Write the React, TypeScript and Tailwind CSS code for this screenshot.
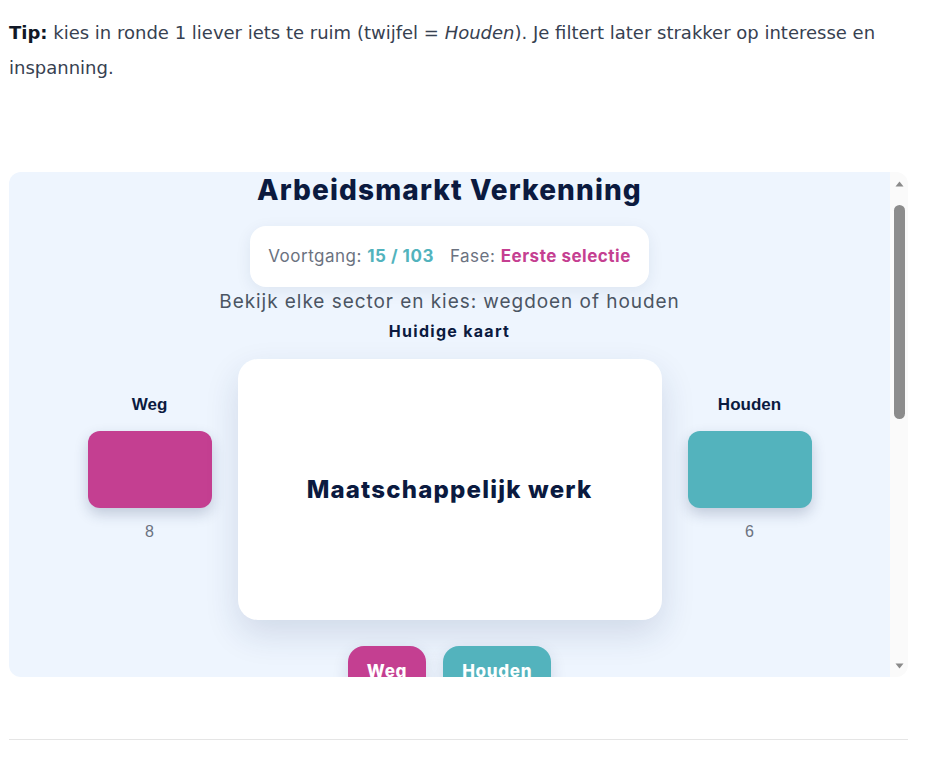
import React from 'react'

const heading = { fontFamily: 'Inter, "Open Sans", sans-serif' }

function Pile({ label, count, color }: { label: string; count: number; color: string }) {
  return (
    <div className="flex w-[124px] flex-col items-center pt-[36px]" style={{ fontFamily: '"Liberation Sans", Arial, sans-serif' }}>
      <div className="text-[17px] font-bold leading-[20px] text-[#0b1a3f]">{label}</div>
      <div className={`mt-[16px] h-[77px] w-[124px] rounded-[12px] shadow-[0_6px_14px_rgba(30,50,90,0.22)] ${color}`} />
      <div className="mt-[14px] text-[16px] leading-[20px] text-[#6b7280]">{count}</div>
    </div>
  )
}

function Scrollbar() {
  return (
    <div className="flex w-[18px] flex-col items-center bg-[#fafafa]">
      <svg width="9" height="6" viewBox="0 0 9 6" className="mt-[9px]">
        <path d="M0.5 5.5 L4.5 0.5 L8.5 5.5 Z" fill="#8a8a8a" />
      </svg>
      <div className="mt-[18px] h-[214px] w-[11px] rounded-full bg-[#8c8c8c]" />
      <div className="flex-1" />
      <svg width="9" height="6" viewBox="0 0 9 6" className="mb-[8px]">
        <path d="M0.5 0.5 L4.5 5.5 L8.5 0.5 Z" fill="#8a8a8a" />
      </svg>
    </div>
  )
}

export default function App() {
  return (
    <div className="min-h-[771px] bg-white">
      <div className="ml-[9px] w-[899px]">
        <p
          className="pt-[15px] text-[18px] leading-[35px] text-[#374151]"
          style={{ fontFamily: '"DejaVu Sans", "Open Sans", sans-serif' }}
        >
          <strong className="font-bold text-[#111827]">Tip:</strong> kies in ronde 1 liever iets te ruim (twijfel ={' '}
          <em>Houden</em>). Je filtert later strakker op interesse en inspanning.
        </p>

        <div className="mt-[87px] flex h-[505px] overflow-hidden rounded-[12px]">
          <div className="flex-1 overflow-hidden bg-[#eef5fe]">
            <div className="flex flex-col items-center pt-[1px]" style={heading}>
              <h1 className="text-[28px] font-extrabold leading-[34px] tracking-[0.04em] text-[#0b1a3f]">Arbeidsmarkt Verkenning</h1>

              <div className="mt-[19px] rounded-[16px] bg-white px-[18px] py-[18px] text-[17px] leading-[25px] tracking-[0.03em] text-[#6b7280] shadow-[0_4px_16px_rgba(30,50,90,0.08)]">
                Voortgang: <span className="font-bold text-[#52b3bd]">15 / 103</span>
                <span className="ml-[16px]">Fase: </span>
                <span className="font-bold text-[#c53f91]">Eerste selectie</span>
              </div>

              <p className="mt-[1px] text-[19px] leading-[28px] tracking-[0.05em] text-[#4b5563]">Bekijk elke sector en kies: wegdoen of houden</p>
              <p className="mt-[4px] text-[16px] font-bold leading-[22px] tracking-[0.08em] text-[#0b1a3f]">Huidige kaart</p>

              <div className="mt-[17px] flex items-start gap-[26px]">
                <Pile label="Weg" count={8} color="bg-[#c43f91]" />
                <div className="flex h-[261px] w-[424px] items-center justify-center rounded-[20px] bg-white shadow-[0_14px_34px_rgba(30,50,100,0.14)]">
                  <span className="text-[24px] font-extrabold tracking-[0.05em] text-[#0b1a3f]">Maatschappelijk werk</span>
                </div>
                <Pile label="Houden" count={6} color="bg-[#53b3bd]" />
              </div>

              <div className="mt-[26px] flex gap-[17px]">
                <button className="rounded-[16px] bg-[#c43f91] px-[19px] py-[13px] text-[17px] font-extrabold tracking-[0.04em] text-white shadow-[0_6px_16px_rgba(30,50,90,0.15)]">
                  Weg
                </button>
                <button className="rounded-[16px] bg-[#53b3bd] px-[19px] py-[13px] text-[17px] font-extrabold tracking-[0.04em] text-white shadow-[0_6px_16px_rgba(30,50,90,0.15)]">
                  Houden
                </button>
              </div>
              <div className="h-[400px]" />
            </div>
          </div>
          <Scrollbar />
        </div>

        <div className="mt-[62px] h-[1px] bg-[#e5e5e5]" />
      </div>
    </div>
  )
}
